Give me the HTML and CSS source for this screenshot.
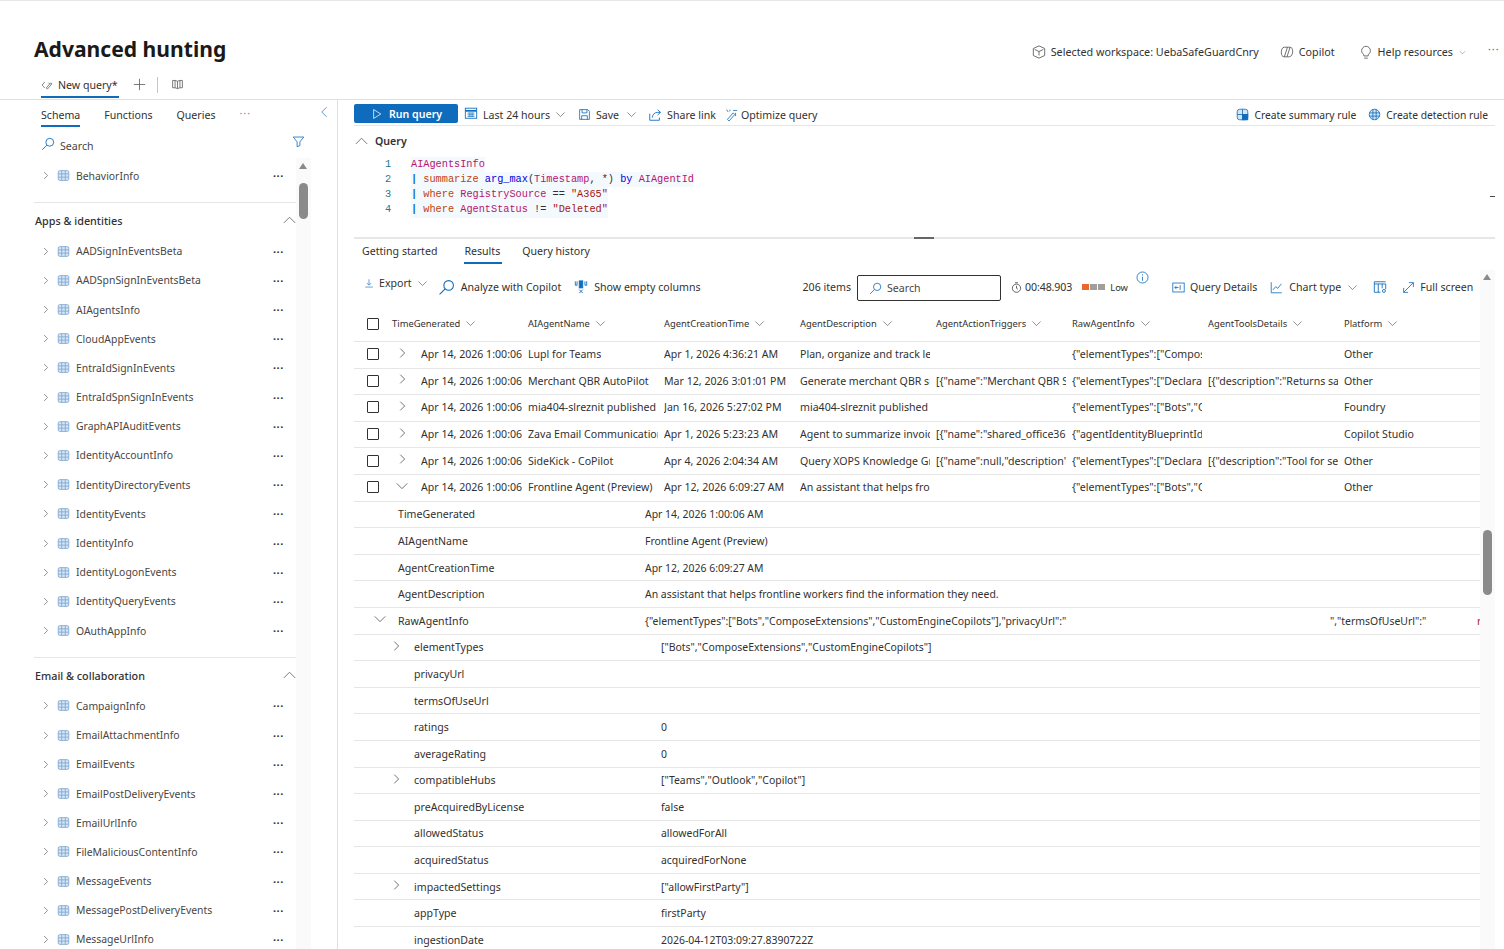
FILE: index.html
```html
<!DOCTYPE html>
<html lang="en">
<head>
<meta charset="utf-8">
<title>Advanced hunting</title>
<link rel="stylesheet" href="styles.css">
</head>
<body>
<svg class="defs" aria-hidden="true">
  <symbol id="i-right" viewBox="0 0 16 16"><path d="M6 3l5 5-5 5"/></symbol>
  <symbol id="i-down" viewBox="0 0 16 16"><path d="M2 5l6 6 6-6"/></symbol>
  <symbol id="i-up" viewBox="0 0 16 16"><path d="M1 11l7-7 7 7"/></symbol>
  <symbol id="i-left" viewBox="0 0 16 16"><path d="M11 1L4 8l7 7"/></symbol>
  <symbol id="i-table" viewBox="0 0 16 16"><rect x="1.5" y="2" width="13" height="12" rx="2" fill="#d5e5f5"/><path d="M1.5 6h13M1.5 10h13M5.8 2v12M10.2 2v12"/></symbol>
  <symbol id="i-search" viewBox="0 0 16 16"><circle cx="10" cy="6" r="4.5"/><path d="M6.7 9.3L1.5 14.5"/></symbol>
  <symbol id="i-filter" viewBox="0 0 16 16"><path d="M1.5 2.5h13L9.7 8.5v4.5l-3.4 1.5V8.5z"/></symbol>
  <symbol id="i-play" viewBox="0 0 16 16"><path d="M3.5 2l9.5 6-9.5 6z"/></symbol>
  <symbol id="i-cal" viewBox="0 0 16 16"><rect x="1.5" y="2.5" width="13" height="11.5"/><path d="M1.5 5.5h13" stroke-width="2"/><path d="M4 8h8M4 10h8M4 12h8M6 7.5v5M8 7.5v5M10 7.5v5" stroke-width=".7"/></symbol>
  <symbol id="i-save" viewBox="0 0 16 16"><path d="M2 2h10l2 2v10H2z"/><path d="M5 2v4h6V2M4.5 14V9.5h7V14"/></symbol>
  <symbol id="i-share" viewBox="0 0 16 16"><path d="M2 6.5V14h11v-3"/><path d="M5 11c0-4 3-6 6-6h3M11 2l3.300 3L11 8"/></symbol>
  <symbol id="i-opt" viewBox="0 0 16 16"><path d="M3 14l7-8 2 2-7 8z"/><path d="M10 3h5M13 6v4M2 2l2 3M6 2v2" stroke="#0f6cbd"/></symbol>
  <symbol id="i-sumr" viewBox="0 0 16 16"><rect x="1.5" y="1.5" width="13" height="13" rx="3" fill="#d5e5f5"/><path d="M8 1.5v13M1.5 8h13"/><rect x="8" y="8" width="6.5" height="6.5" fill="#0f6cbd"/></symbol>
  <symbol id="i-det" viewBox="0 0 16 16"><circle cx="8" cy="8" r="6.5" fill="#d5e5f5"/><path d="M1.5 6h13M1.5 10h13M6 1.5v13M10 1.5v13"/></symbol>
  <symbol id="i-cube" viewBox="0 0 16 16"><path d="M8 1l6.5 3v8L8 15l-6.500-3V4zM3 5l5 2.500L13 5M8 7.500V12"/></symbol>
  <symbol id="i-copilot" viewBox="0 0 16 16"><path d="M5 2.500h6c2.500 0 3.500 2 3.500 4.500s-1 6.500-4 6.500H5c-2.500 0-3.500-2-3.500-4.500S2 2.500 5 2.500z"/><path d="M5 13.500L8.500 2.500M8 13.500L11.500 2.500"/></symbol>
  <symbol id="i-bulb" viewBox="0 0 16 16"><path d="M5.500 11C4 9.800 3 8.500 3 6.500a5 5 0 0110 0c0 2-1 3.300-2.500 4.500v1.500h-5zM6 15h4"/></symbol>
  <symbol id="i-edit" viewBox="0 0 16 16"><path d="M5 4L1.500 8 5 12M7 12l6-7 1.500 1.500-6 7zM10 5l2 2"/></symbol>
  <symbol id="i-plus" viewBox="0 0 16 16"><path d="M8 1v14M1 8h14"/></symbol>
  <symbol id="i-map" viewBox="0 0 16 16"><path d="M2 3h3l3 1 3-1h3v9h-3l-3 1-3-1H2zM5 3v9M8 4v9M11 3v9"/></symbol>
  <symbol id="i-export" viewBox="0 0 16 16"><path d="M8 2v9M4.500 8L8 11.500 11.500 8M2 14.500h12"/></symbol>
  <symbol id="i-empty" viewBox="0 0 16 16"><path d="M1.500 1.500v4.500h2v-4.500M14.500 1.500v4.500h-2v-4.500"/><rect x="6" y="1" width="4" height="8" fill="#0f6cbd"/><path d="M6 11l4 4M10 11l-4 4"/></symbol>
  <symbol id="i-clock" viewBox="0 0 16 16"><circle cx="8" cy="9" r="6"/><path d="M8 5.500V9l2 1.500M6 1h4"/></symbol>
  <symbol id="i-info" viewBox="0 0 16 16"><circle cx="8" cy="8" r="6.800"/><path d="M8 7v5M8 4v1.500"/></symbol>
  <symbol id="i-qd" viewBox="0 0 16 16"><rect x="1" y="2.500" width="14" height="11"/><path d="M10 5v6M8 8H3.500M5.500 6L3.500 8l2 2"/></symbol>
  <symbol id="i-chart" viewBox="0 0 16 16"><path d="M1.500 1.500v13h13M3.500 11l3.500-4 2.500 2L14 3.500"/></symbol>
  <symbol id="i-cols" viewBox="0 0 16 16"><path d="M1.500 2h13M1.500 4.500h13v6M1.500 2v12h7M6 4.500V14M10.500 4.500v5"/><circle cx="12.500" cy="12.500" r="1.700"/></symbol>
  <symbol id="i-full" viewBox="0 0 16 16"><path d="M2 14L14 2M8.500 2H14v5.500M2 8.500V14h5.500"/></symbol>
</svg>

<header class="page-head">
  <div class="title-row">
    <h1 class="title">Advanced hunting</h1>
    <div class="head-actions">
      <span class="hact"><svg class="ic14 grey"><use href="#i-cube"/></svg>Selected workspace: UebaSafeGuardCnry</span>
      <span class="hact h-copilot"><svg class="ic14 grey"><use href="#i-copilot"/></svg>Copilot</span>
      <span class="hact h-help"><svg class="ic14 grey"><use href="#i-bulb"/></svg>Help resources<svg class="chev8 grey"><use href="#i-down"/></svg></span>
      <span class="more-h">···</span>
    </div>
  </div>
  <div class="qtabs">
    <span class="qtab"><svg class="ic12 grey"><use href="#i-edit"/></svg>New query*</span>
    <svg class="qplus grey"><use href="#i-plus"/></svg>
    <span class="qsep"></span>
    <svg class="ic13 grey"><use href="#i-map"/></svg>
  </div>
</header>

<div class="workspace">
  <aside class="side">
    <div class="side-tabs">
      <span class="stab on">Schema</span><span class="stab">Functions</span><span class="stab">Queries</span><span class="stab dim">···</span>
      <svg class="collapse blue"><use href="#i-left"/></svg>
    </div>
    <div class="side-body">
      <div class="side-content">
        <div class="side-search"><svg class="ic14 blue"><use href="#i-search"/></svg><span>Search</span><svg class="ic14 blue filter"><use href="#i-filter"/></svg></div>
        <ul class="tlist first">
          <li class="titem"><svg class="chev8 grey"><use href="#i-right"/></svg><svg class="ic13 tbl"><use href="#i-table"/></svg><span class="tname">BehaviorInfo</span><b class="dots">···</b></li>
        </ul>
        <section class="sec">
          <h3 class="sec-h">Apps &amp; identities<svg class="ic13 grey"><use href="#i-up"/></svg></h3>
          <ul class="tlist">
            <li class="titem"><svg class="chev8 grey"><use href="#i-right"/></svg><svg class="ic13 tbl"><use href="#i-table"/></svg><span class="tname">AADSignInEventsBeta</span><b class="dots">···</b></li>
            <li class="titem"><svg class="chev8 grey"><use href="#i-right"/></svg><svg class="ic13 tbl"><use href="#i-table"/></svg><span class="tname">AADSpnSignInEventsBeta</span><b class="dots">···</b></li>
            <li class="titem"><svg class="chev8 grey"><use href="#i-right"/></svg><svg class="ic13 tbl"><use href="#i-table"/></svg><span class="tname">AIAgentsInfo</span><b class="dots">···</b></li>
            <li class="titem"><svg class="chev8 grey"><use href="#i-right"/></svg><svg class="ic13 tbl"><use href="#i-table"/></svg><span class="tname">CloudAppEvents</span><b class="dots">···</b></li>
            <li class="titem"><svg class="chev8 grey"><use href="#i-right"/></svg><svg class="ic13 tbl"><use href="#i-table"/></svg><span class="tname">EntraIdSignInEvents</span><b class="dots">···</b></li>
            <li class="titem"><svg class="chev8 grey"><use href="#i-right"/></svg><svg class="ic13 tbl"><use href="#i-table"/></svg><span class="tname">EntraIdSpnSignInEvents</span><b class="dots">···</b></li>
            <li class="titem"><svg class="chev8 grey"><use href="#i-right"/></svg><svg class="ic13 tbl"><use href="#i-table"/></svg><span class="tname">GraphAPIAuditEvents</span><b class="dots">···</b></li>
            <li class="titem"><svg class="chev8 grey"><use href="#i-right"/></svg><svg class="ic13 tbl"><use href="#i-table"/></svg><span class="tname">IdentityAccountInfo</span><b class="dots">···</b></li>
            <li class="titem"><svg class="chev8 grey"><use href="#i-right"/></svg><svg class="ic13 tbl"><use href="#i-table"/></svg><span class="tname">IdentityDirectoryEvents</span><b class="dots">···</b></li>
            <li class="titem"><svg class="chev8 grey"><use href="#i-right"/></svg><svg class="ic13 tbl"><use href="#i-table"/></svg><span class="tname">IdentityEvents</span><b class="dots">···</b></li>
            <li class="titem"><svg class="chev8 grey"><use href="#i-right"/></svg><svg class="ic13 tbl"><use href="#i-table"/></svg><span class="tname">IdentityInfo</span><b class="dots">···</b></li>
            <li class="titem"><svg class="chev8 grey"><use href="#i-right"/></svg><svg class="ic13 tbl"><use href="#i-table"/></svg><span class="tname">IdentityLogonEvents</span><b class="dots">···</b></li>
            <li class="titem"><svg class="chev8 grey"><use href="#i-right"/></svg><svg class="ic13 tbl"><use href="#i-table"/></svg><span class="tname">IdentityQueryEvents</span><b class="dots">···</b></li>
            <li class="titem"><svg class="chev8 grey"><use href="#i-right"/></svg><svg class="ic13 tbl"><use href="#i-table"/></svg><span class="tname">OAuthAppInfo</span><b class="dots">···</b></li>
          </ul>
        </section>
        <section class="sec">
          <h3 class="sec-h">Email &amp; collaboration<svg class="ic13 grey"><use href="#i-up"/></svg></h3>
          <ul class="tlist">
            <li class="titem"><svg class="chev8 grey"><use href="#i-right"/></svg><svg class="ic13 tbl"><use href="#i-table"/></svg><span class="tname">CampaignInfo</span><b class="dots">···</b></li>
            <li class="titem"><svg class="chev8 grey"><use href="#i-right"/></svg><svg class="ic13 tbl"><use href="#i-table"/></svg><span class="tname">EmailAttachmentInfo</span><b class="dots">···</b></li>
            <li class="titem"><svg class="chev8 grey"><use href="#i-right"/></svg><svg class="ic13 tbl"><use href="#i-table"/></svg><span class="tname">EmailEvents</span><b class="dots">···</b></li>
            <li class="titem"><svg class="chev8 grey"><use href="#i-right"/></svg><svg class="ic13 tbl"><use href="#i-table"/></svg><span class="tname">EmailPostDeliveryEvents</span><b class="dots">···</b></li>
            <li class="titem"><svg class="chev8 grey"><use href="#i-right"/></svg><svg class="ic13 tbl"><use href="#i-table"/></svg><span class="tname">EmailUrlInfo</span><b class="dots">···</b></li>
            <li class="titem"><svg class="chev8 grey"><use href="#i-right"/></svg><svg class="ic13 tbl"><use href="#i-table"/></svg><span class="tname">FileMaliciousContentInfo</span><b class="dots">···</b></li>
            <li class="titem"><svg class="chev8 grey"><use href="#i-right"/></svg><svg class="ic13 tbl"><use href="#i-table"/></svg><span class="tname">MessageEvents</span><b class="dots">···</b></li>
            <li class="titem"><svg class="chev8 grey"><use href="#i-right"/></svg><svg class="ic13 tbl"><use href="#i-table"/></svg><span class="tname">MessagePostDeliveryEvents</span><b class="dots">···</b></li>
            <li class="titem"><svg class="chev8 grey"><use href="#i-right"/></svg><svg class="ic13 tbl"><use href="#i-table"/></svg><span class="tname">MessageUrlInfo</span><b class="dots">···</b></li>
          </ul>
        </section>
      </div>
      <div class="vscroll side-scroll"><i class="arrow"></i><i class="thumb"></i></div>
    </div>
  </aside>

  <main class="main">
    <div class="toolbar">
      <button class="run"><svg class="ic13"><use href="#i-play"/></svg>Run query</button>
      <span class="tb t-time"><svg class="ic14 blue"><use href="#i-cal"/></svg>Last 24 hours<svg class="chev10 grey"><use href="#i-down"/></svg></span>
      <span class="tb t-save"><svg class="ic13 blue"><use href="#i-save"/></svg>Save<svg class="chev10 grey"><use href="#i-down"/></svg></span>
      <span class="tb t-share"><svg class="ic14 blue"><use href="#i-share"/></svg>Share link</span>
      <span class="tb t-opt"><svg class="ic13 blue"><use href="#i-opt"/></svg>Optimize query</span>
      <span class="tb t-sum"><svg class="ic13 blue"><use href="#i-sumr"/></svg>Create summary rule</span>
      <span class="tb t-det"><svg class="ic13 blue"><use href="#i-det"/></svg>Create detection rule</span>
    </div>

    <div class="query-h"><svg class="ic13 grey"><use href="#i-up"/></svg>Query</div>
    <div class="code">
      <div class="cl"><span class="ln">1</span><span class="src"><span class="tb-name">AIAgentsInfo</span></span></div>
      <div class="cl"><span class="ln">2</span><span class="src"><span class="pipe">|</span> <span class="kw">summarize</span> <span class="fn">arg_max</span>(<span class="tb-name">Timestamp</span>, *) <span class="fn">by</span> <span class="tb-name">AIAgentId</span></span></div>
      <div class="cl"><span class="ln">3</span><span class="src"><span class="pipe">|</span> <span class="kw">where</span> <span class="tb-name">RegistrySource</span> == <span class="str">"A365"</span></span></div>
      <div class="cl"><span class="ln">4</span><span class="src"><span class="pipe">|</span> <span class="kw">where</span> <span class="tb-name">AgentStatus</span> != <span class="str">"Deleted"</span></span></div>
      <span class="ed-mark"></span>
    </div>
    <div class="splitter"><span class="grip"></span></div>

    <div class="rtabs">
      <span class="rtab">Getting started</span><span class="rtab on">Results</span><span class="rtab">Query history</span>
    </div>

    <div class="results">
      <div class="res-main">
        <div class="res-tools">
          <span class="rt r-export"><svg class="ic10 blue"><use href="#i-export"/></svg>Export<svg class="chev10 grey"><use href="#i-down"/></svg></span>
          <span class="rt r-an"><svg class="ic17 blue"><use href="#i-search"/></svg>Analyze with Copilot</span>
          <span class="rt r-empty"><svg class="ic14 blue"><use href="#i-empty"/></svg>Show empty columns</span>
          <span class="rt r-count">206 items</span>
          <span class="res-search"><svg class="ic13 blue"><use href="#i-search"/></svg>Search</span>
          <span class="rt r-clock"><svg class="ic11 dark"><use href="#i-clock"/></svg>00:48.903</span>
          <span class="bars"><i class="bar hot"></i><i class="bar"></i><i class="bar"></i></span>
          <span class="low">Low</span>
          <svg class="ic13 blue info"><use href="#i-info"/></svg>
          <span class="rt r-qd"><svg class="ic13 blue"><use href="#i-qd"/></svg>Query Details</span>
          <span class="rt r-chart"><svg class="ic13 blue"><use href="#i-chart"/></svg>Chart type<svg class="chev10 grey"><use href="#i-down"/></svg></span>
          <svg class="ic14 blue r-cols"><use href="#i-cols"/></svg>
          <span class="rt r-full"><svg class="ic13 blue"><use href="#i-full"/></svg>Full screen</span>
        </div>

        <div class="grid ghead">
          <span class="ccheck"><i class="check"></i></span>
          <span class="hc">TimeGenerated<svg class="chev10 grey"><use href="#i-down"/></svg></span>
          <span class="hc">AIAgentName<svg class="chev10 grey"><use href="#i-down"/></svg></span>
          <span class="hc">AgentCreationTime<svg class="chev10 grey"><use href="#i-down"/></svg></span>
          <span class="hc">AgentDescription<svg class="chev10 grey"><use href="#i-down"/></svg></span>
          <span class="hc">AgentActionTriggers<svg class="chev10 grey"><use href="#i-down"/></svg></span>
          <span class="hc">RawAgentInfo<svg class="chev10 grey"><use href="#i-down"/></svg></span>
          <span class="hc">AgentToolsDetails<svg class="chev10 grey"><use href="#i-down"/></svg></span>
          <span class="hc">Platform<svg class="chev10 grey"><use href="#i-down"/></svg></span>
        </div>

        <div class="grid grow"><span class="ccheck"><i class="check"></i></span><span class="c1"><svg class="exp grey"><use href="#i-right"/></svg><span class="ct">Apr 14, 2026 1:00:06 AM</span></span><span class="c">Lupl for Teams</span><span class="c">Apr 1, 2026 4:36:21 AM</span><span class="c">Plan, organize and track learning</span><span class="c"></span><span class="c">{"elementTypes":["ComposeExtensions"]}</span><span class="c"></span><span class="c">Other</span></div>
        <div class="grid grow"><span class="ccheck"><i class="check"></i></span><span class="c1"><svg class="exp grey"><use href="#i-right"/></svg><span class="ct">Apr 14, 2026 1:00:06 AM</span></span><span class="c">Merchant QBR AutoPilot</span><span class="c">Mar 12, 2026 3:01:01 PM</span><span class="c">Generate merchant QBR summaries</span><span class="c">[{"name":"Merchant QBR Summary"}]</span><span class="c">{"elementTypes":["DeclarativeAgents"]}</span><span class="c">[{"description":"Returns sales data"}]</span><span class="c">Other</span></div>
        <div class="grid grow"><span class="ccheck"><i class="check"></i></span><span class="c1"><svg class="exp grey"><use href="#i-right"/></svg><span class="ct">Apr 14, 2026 1:00:06 AM</span></span><span class="c">mia404-slreznit published</span><span class="c">Jan 16, 2026 5:27:02 PM</span><span class="c">mia404-slreznit published</span><span class="c"></span><span class="c">{"elementTypes":["Bots","ComposeExtensions"]}</span><span class="c"></span><span class="c">Foundry</span></div>
        <div class="grid grow"><span class="ccheck"><i class="check"></i></span><span class="c1"><svg class="exp grey"><use href="#i-right"/></svg><span class="ct">Apr 14, 2026 1:00:06 AM</span></span><span class="c">Zava Email Communications</span><span class="c">Apr 1, 2026 5:23:23 AM</span><span class="c">Agent to summarize invoices and mail</span><span class="c">[{"name":"shared_office365users"}]</span><span class="c">{"agentIdentityBlueprintIds":[]}</span><span class="c"></span><span class="c">Copilot Studio</span></div>
        <div class="grid grow"><span class="ccheck"><i class="check"></i></span><span class="c1"><svg class="exp grey"><use href="#i-right"/></svg><span class="ct">Apr 14, 2026 1:00:06 AM</span></span><span class="c">SideKick - CoPilot</span><span class="c">Apr 4, 2026 2:04:34 AM</span><span class="c">Query XOPS Knowledge Graph</span><span class="c">[{"name":null,"description":"</span><span class="c">{"elementTypes":["DeclarativeAgents"]}</span><span class="c">[{"description":"Tool for searching"}]</span><span class="c">Other</span></div>
        <div class="grid grow"><span class="ccheck"><i class="check"></i></span><span class="c1"><svg class="exp grey"><use href="#i-down"/></svg><span class="ct">Apr 14, 2026 1:00:06 AM</span></span><span class="c">Frontline Agent (Preview)</span><span class="c">Apr 12, 2026 6:09:27 AM</span><span class="c">An assistant that helps frontline workers</span><span class="c"></span><span class="c">{"elementTypes":["Bots","ComposeExtensions"]}</span><span class="c"></span><span class="c">Other</span></div>

        <div class="drow"><span class="dk">TimeGenerated</span><span class="dv">Apr 14, 2026 1:00:06 AM</span></div>
        <div class="drow"><span class="dk">AIAgentName</span><span class="dv">Frontline Agent (Preview)</span></div>
        <div class="drow"><span class="dk">AgentCreationTime</span><span class="dv">Apr 12, 2026 6:09:27 AM</span></div>
        <div class="drow"><span class="dk">AgentDescription</span><span class="dv">An assistant that helps frontline workers find the information they need.</span></div>
        <div class="drow raw"><svg class="dexp grey"><use href="#i-down"/></svg><span class="dk">RawAgentInfo</span><span class="dv">{"elementTypes":["Bots","ComposeExtensions","CustomEngineCopilots"],"privacyUrl":"</span><span class="dv2">","termsOfUseUrl":"</span><span class="dv3">r</span></div>
        <div class="drow sub"><svg class="dexp grey"><use href="#i-right"/></svg><span class="dk">elementTypes</span><span class="dv">["Bots","ComposeExtensions","CustomEngineCopilots"]</span></div>
        <div class="drow sub"><span class="dk">privacyUrl</span><span class="dv"></span></div>
        <div class="drow sub"><span class="dk">termsOfUseUrl</span><span class="dv"></span></div>
        <div class="drow sub"><span class="dk">ratings</span><span class="dv">0</span></div>
        <div class="drow sub"><span class="dk">averageRating</span><span class="dv">0</span></div>
        <div class="drow sub"><svg class="dexp grey"><use href="#i-right"/></svg><span class="dk">compatibleHubs</span><span class="dv">["Teams","Outlook","Copilot"]</span></div>
        <div class="drow sub"><span class="dk">preAcquiredByLicense</span><span class="dv">false</span></div>
        <div class="drow sub"><span class="dk">allowedStatus</span><span class="dv">allowedForAll</span></div>
        <div class="drow sub"><span class="dk">acquiredStatus</span><span class="dv">acquiredForNone</span></div>
        <div class="drow sub"><svg class="dexp grey"><use href="#i-right"/></svg><span class="dk">impactedSettings</span><span class="dv">["allowFirstParty"]</span></div>
        <div class="drow sub"><span class="dk">appType</span><span class="dv">firstParty</span></div>
        <div class="drow sub"><span class="dk">ingestionDate</span><span class="dv">2026-04-12T03:09:27.8390722Z</span></div>
      </div>
      <div class="vscroll res-scroll"><i class="arrow"></i><i class="thumb"></i></div>
    </div>
  </main>
</div>
</body>
</html>
```

FILE: styles.css
```css
* { box-sizing: border-box; }
html, body { margin: 0; height: 949px; overflow: hidden; }
body {
  width: 1504px;
  background: #fff;
  color: #323130;
  font-family: "Noto Sans", "Open Sans", sans-serif;
  font-size: 10.6px;
  border-top: 1px solid #e6e6e6;
}
.defs { display: none; }
svg { fill: none; stroke: currentColor; stroke-width: 1; flex: none; display: block; overflow: visible; }
ul { list-style: none; margin: 0; padding: 0; }
.grey { color: #605e5c; }
.blue { color: #0f6cbd; }
.dark { color: #242424; }
.ic10 { width: 10px; height: 10px; }
.ic11 { width: 11px; height: 11px; }
.ic12 { width: 12px; height: 12px; }
.ic13 { width: 13px; height: 13px; }
.ic14 { width: 14px; height: 14px; }
.ic17 { width: 17px; height: 17px; }
.chev8 { width: 7px; height: 7px; }
.chev10 { width: 11px; height: 11px; }

/* header */
.page-head { height: 99px; border-bottom: 1px solid #e0e0e0; padding-left: 34px; }
.title-row { height: 71px; display: flex; align-items: flex-start; }
.title { margin: 32px 0 0; font-size: 21.1px; line-height: 32px; font-weight: 700; color: #1b1a19; }
.head-actions { margin-left: auto; margin-top: 43px; display: flex; align-items: center; height: 16px; }
.hact { display: flex; align-items: center; gap: 5px; margin-left: 22px; color: #323130; font-size: 10.75px; white-space: nowrap; }
.h-copilot { margin-left: 21px; }
.h-help { margin-left: 24px; }
.hact .chev8 { margin-left: 1px; }
.more-h { margin-left: 22px; width: 16px; letter-spacing: 1px; color: #605e5c; margin-top: -6px; }
.qtabs { display: flex; align-items: center; height: 27px; padding-left: 7px; gap: 14px; }
.qtab { display: flex; align-items: center; gap: 5px; height: 25px; padding-top: 0; border-bottom: 2px solid #0f6cbd; width: 78px; }
.qplus { width: 13px; height: 13px; margin-top: -2px; }
.qsep { width: 1px; height: 16px; background: #c8c6c4; margin-top: -2px; margin-left: -3px; }
.qtabs .ic13 { margin-left: -1px; margin-top: -2px; }

/* workspace */
.workspace { display: flex; height: 849px; }
.side { width: 338px; flex: none; border-right: 1px solid #e0e0e0; position: relative; }
.side-tabs { height: 27px; display: flex; align-items: flex-start; padding-left: 41px; position: relative; }
.stab { margin-right: 24px; height: 27px; line-height: 30px; border-bottom: 2px solid transparent; }
.stab.on { border-bottom-color: #0f6cbd; }
.stab.dim { color: #8a8886; letter-spacing: 1px; line-height: 27px; }
.collapse { position: absolute; left: 319px; top: 6px; width: 11px; height: 12px; }
.side-body { display: flex; height: 822px; overflow: hidden; }
.side-content { width: 296px; flex: none; }
.side-search { display: flex; align-items: center; height: 34px; padding-left: 41px; gap: 5px; position: relative; }
.filter { margin-left: auto; margin-top: -5px; margin-right: -9px; width: 13px; height: 13px; }
.side-search span { margin-top: 3px; color: #484644; }
.tlist.first { padding-bottom: 12px; }
.titem { display: flex; align-items: center; height: 29.2px; padding-left: 40px; }
.titem .chev8 { width: 11px; height: 11px; }
.tbl { color: #7aa5d0; margin-left: 6px; }
.tname { margin-left: 6px; color: #484644; font-size: 10.4px; }
.dots { margin-left: auto; margin-right: 12px; font-size: 11px; letter-spacing: .6px; color: #323130; font-weight: 700; }
.sec { border-top: 1px solid #e6e6e6; margin-left: 34px; padding-bottom: 11.8px; }
.sec .tlist { margin-left: -34px; }
.sec-h { margin: 0; height: 33.4px; padding-top: 2px; display: flex; align-items: center; justify-content: space-between; font-size: 10.8px; font-weight: 500; padding-left: 1px; color: #323130; }
.vscroll { position: relative; background: #fafafa; flex: none; width: 15px; }
.arrow { position: absolute; left: 3px; width: 0; height: 0; border-left: 4.5px solid transparent; border-right: 4.5px solid transparent; border-bottom: 6px solid #8a8a8a; }
.thumb { position: absolute; left: 3px; width: 9px; background: #8a8a8a; border-radius: 5px; }
.side-scroll { margin-top: 31px; }
.side-scroll .arrow { top: 5px; }
.side-scroll .thumb { top: 25px; height: 36px; }

/* main */
.main { flex: 1; padding-left: 16px; padding-right: 9px; min-width: 0; }
.toolbar { height: 26px; display: flex; align-items: center; border-bottom: 1px solid #e6e6e6; padding-bottom: 2px; padding-top: 3px; }
.run { display: flex; align-items: center; width: 104px; height: 19px; padding: 1px 0 0 17px; gap: 6px; background: #0f6cbd; color: #fff; border: 0; border-radius: 2px; font: 600 10.6px "Noto Sans", sans-serif; margin-top: 1px; }
.run .ic13 { width: 12px; height: 12px; margin-top: -1px; }
.tb { display: flex; align-items: center; gap: 5px; margin-left: 6px; color: #323130; padding-top: 3px; }
.t-time .ic14 { margin-top: -3px; }
.t-save { margin-left: 12px; }
.t-save .chev10 { margin-left: 2px; }
.t-share { margin-left: 11px; }
.t-opt { margin-left: 9px; gap: 3px; }
.t-sum { margin-left: auto; font-size: 10.3px; }
.t-det { margin-left: 12px; margin-right: 7px; font-size: 10.3px; }
.query-h { display: flex; align-items: center; gap: 7px; height: 30px; font-weight: 600; color: #323130; padding-left: 1px; }
.code { position: relative; height: 81px; padding-top: .6px; font-family: "Liberation Mono", monospace; font-size: 10.25px; }
.cl { display: flex; height: 15.3px; line-height: 15.3px; }
.ln { width: 57px; padding-left: 31px; color: #237893; }
.src { background: #f4f9fd; white-space: pre; color: #323130; }
.tb-name { color: #b5146f; }
.kw { color: #c2410c; }
.fn { color: #0000e0; }
.str { color: #a31515; }
.pipe { color: #0f6cbd; font-weight: 700; }
.ed-mark { position: absolute; left: 1136px; top: 40px; width: 5px; height: 1px; background: #444; }
.splitter { height: 2px; background: #e6e6e6; position: relative; }
.grip { position: absolute; left: 560px; top: 0; width: 20px; height: 2px; background: #666; }
.rtabs { height: 31px; display: flex; padding-left: 8px; }
.rtab { height: 25px; line-height: 24px; margin-right: 27px; border-bottom: 2px solid transparent; }
.rtab.on { border-bottom-color: #0f6cbd; margin-right: 20px; padding-right: 2px; }
.results { display: flex; height: 680px; overflow: hidden; }
.res-main { width: 1126px; flex: none; }
.res-scroll .arrow { top: 4px; }
.res-scroll .thumb { top: 260px; height: 65px; }

.res-tools { height: 36px; display: flex; align-items: center; color: #323130; padding-bottom: 2px; }
.res-tools > * { flex: none; white-space: nowrap; }
.rt { display: flex; align-items: center; gap: 5px; }
.r-export { margin-left: 10px; margin-top: -8px; }
.r-an { margin-left: 10px; gap: 6px; }
.r-empty { margin-left: 13px; gap: 6px; }
.r-count { margin-left: 102px; }
.res-search { display: flex; align-items: center; gap: 5px; width: 144px; height: 26px; margin-left: 6px; border: 1px solid #323130; border-radius: 2px; padding-left: 11px; margin-top: 2px; color: #484644; }
.r-clock { margin-left: 10px; gap: 3px; letter-spacing: -.1px; }
.bars { display: flex; gap: 1px; margin-left: 10px; }
.bar { width: 7px; height: 6px; background: #a19f9d; }
.bar.hot { background: #e8692a; }
.low { margin-left: 5px; font-size: 9.4px; margin-top: 1px; }
.info { margin-left: 8px; margin-top: -19px; }
.r-qd { margin-left: 23px; }
.r-chart { margin-left: 13px; gap: 6px; }
.r-cols { margin-left: 15px; margin-top: -1px; }
.r-full { margin-left: 15px; }

.grid { display: grid; grid-template-columns: 38px repeat(8, 136px); border-bottom: 1px solid #e6e6e6; }
.ghead { height: 36px; align-items: center; }
.grow { height: 26.6px; align-items: center; padding-bottom: 1px; }
.ccheck { display: flex; justify-content: center; }
.check { display: block; width: 12px; height: 12px; border: 1px solid #323130; border-radius: 1px; }
.hc { display: flex; align-items: center; gap: 5px; font-size: 9.4px; color: #323130; }
.c { white-space: nowrap; overflow: hidden; margin-right: 6px; color: #323130; min-width: 0; }
.c1 { display: flex; align-items: center; margin-right: 6px; min-width: 0; white-space: nowrap; overflow: hidden; }
.exp { width: 14px; height: 14px; margin: -3px 12px 0 3px; }
.ct { overflow: hidden; flex: 1; min-width: 0; }
.drow { position: relative; display: flex; align-items: center; height: 26.6px; border-bottom: 1px solid #e6e6e6; padding-left: 44px; color: #323130; white-space: nowrap; }
.dk { width: 247px; flex: none; }
.dv { min-width: 0; font-size: 10.45px; }
.dexp { position: absolute; left: 19px; top: 4px; width: 14px; height: 14px; }
.raw .dv { width: 685px; flex: none; }
.dv2 { width: 147px; flex: none; font-size: 10.45px; }
.dv3 { color: #a4262c; width: 3px; overflow: hidden; flex: none; }
.sub { padding-left: 60px; }
.sub .dexp { left: 35px; }
```
